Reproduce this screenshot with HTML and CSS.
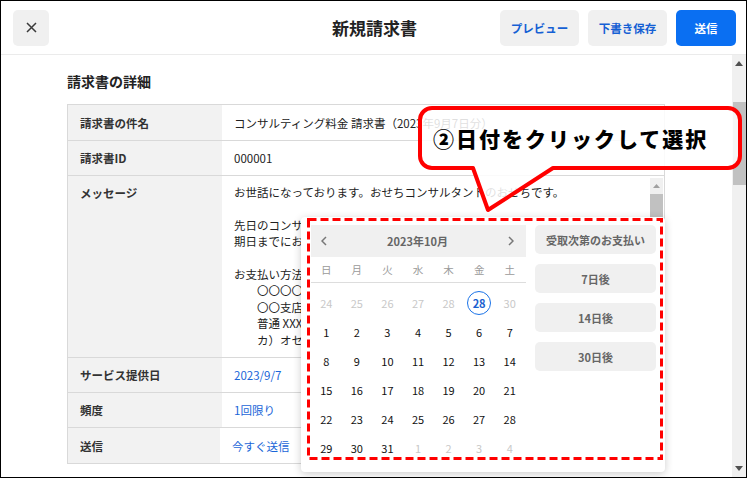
FILE: index.html
```html
<!DOCTYPE html>
<html lang="ja">
<head>
<meta charset="utf-8">
<title>新規請求書</title>
<link rel="stylesheet" href="styles.css">
</head>
<body>
<div class="frame">
  <header class="topbar">
    <div class="tb-left">
      <button class="btn-close" aria-label="閉じる">
        <svg width="11" height="11" viewBox="0 0 11 11"><path d="M1 1 L10 10 M10 1 L1 10" stroke="#3a3a3a" stroke-width="1.5" fill="none"/></svg>
      </button>
    </div>
    <h1 class="title">新規請求書</h1>
    <div class="tb-right">
      <button class="btn btn-gray">プレビュー</button>
      <button class="btn btn-gray">下書き保存</button>
      <button class="btn btn-blue">送信</button>
    </div>
  </header>

  <div class="page">
    <main class="content">
      <h2 class="section-title">請求書の詳細</h2>
      <div class="table">
        <div class="row h36">
          <div class="lbl">請求書の件名</div>
          <div class="val">コンサルティング料金 請求書（2023年9月7日分）</div>
        </div>
        <div class="row h35">
          <div class="lbl">請求書ID</div>
          <div class="val">000001</div>
        </div>
        <div class="row h182 top">
          <div class="lbl">メッセージ</div>
          <div class="val msg">
            <div class="msg-text">お世話になっております。おせちコンサルタントのおせちです。

先日のコンサルティングの請求書をお送りいたします。
期日までにお支払いいただきますようお願いいたします。

お支払い方法：
　　〇〇〇〇銀行
　　〇〇支店
　　普通 XXXXXXX
　　カ）オセチコンサルタント</div>
            <div class="ta-scroll">
              <div class="ta-up"><svg width="7" height="4" viewBox="0 0 7 4"><path d="M0 4 L3.5 0 L7 4 Z" fill="#a0a0a0"/></svg></div>
              <div class="ta-thumb"></div>
            </div>
          </div>
        </div>
        <div class="row h35">
          <div class="lbl">サービス提供日</div>
          <div class="val link">2023/9/7</div>
        </div>
        <div class="row h35">
          <div class="lbl">頻度</div>
          <div class="val link">1回限り</div>
        </div>
        <div class="row h36 last">
          <div class="lbl">送信</div>
          <div class="val link">今すぐ送信</div>
        </div>
      </div>
    </main>
    <div class="vscroll">
      <div class="vs-btn"><svg width="8" height="5" viewBox="0 0 8 5"><path d="M0 5 L4 0 L8 5 Z" fill="#505050"/></svg></div>
      <div class="vs-track"><div class="vs-thumb"></div></div>
      <div class="vs-btn"><svg width="8" height="5" viewBox="0 0 8 5"><path d="M0 0 L4 5 L8 0 Z" fill="#505050"/></svg></div>
    </div>
  </div>

  <div class="popup">
    <div class="cal">
      <div class="cal-head">
        <svg class="chev" width="6" height="10" viewBox="0 0 6 10"><path d="M5 1 L1 5 L5 9" stroke="#777" stroke-width="1.5" fill="none"/></svg>
        <span class="cal-month">2023年10月</span>
        <svg class="chev" width="6" height="10" viewBox="0 0 6 10"><path d="M1 1 L5 5 L1 9" stroke="#777" stroke-width="1.5" fill="none"/></svg>
      </div>
      <div class="cal-week">
        <span>日</span><span>月</span><span>火</span><span>水</span><span>木</span><span>金</span><span>土</span>
      </div>
      <div class="cal-days">
        <span class="mute">24</span><span class="mute">25</span><span class="mute">26</span><span class="mute">27</span><span class="mute">28</span><span><b class="sel">28</b></span><span class="mute">30</span>
        <span>1</span><span>2</span><span>3</span><span>4</span><span>5</span><span>6</span><span>7</span>
        <span>8</span><span>9</span><span>10</span><span>11</span><span>12</span><span>13</span><span>14</span>
        <span>15</span><span>16</span><span>17</span><span>18</span><span>19</span><span>20</span><span>21</span>
        <span>22</span><span>23</span><span>24</span><span>25</span><span>26</span><span>27</span><span>28</span>
        <span>29</span><span>30</span><span>31</span><span class="mute">1</span><span class="mute">2</span><span class="mute">3</span><span class="mute">4</span>
      </div>
    </div>
    <div class="quick">
      <button class="qbtn">受取次第のお支払い</button>
      <button class="qbtn">7日後</button>
      <button class="qbtn">14日後</button>
      <button class="qbtn">30日後</button>
    </div>
  </div>

  <svg class="dash" width="356" height="242" viewBox="0 0 356 242">
    <rect x="1.5" y="1.5" width="353" height="239" fill="none" stroke="#ffffff" stroke-width="3"/>
    <rect x="1.5" y="1.5" width="353" height="239" fill="none" stroke="#ff0000" stroke-width="3" stroke-dasharray="8 4"/>
  </svg>

  <div class="callout">
    <svg class="callout-bg" width="326" height="108" viewBox="0 0 326 108">
      <path d="M14 2 H310 A12 12 0 0 1 322 14 V50 A12 12 0 0 1 310 62 H135 L70 104 L55 62 H14 A12 12 0 0 1 2 50 V14 A12 12 0 0 1 14 2 Z" fill="rgba(255,255,255,0.86)" stroke="#ff0000" stroke-width="4" stroke-linejoin="round"/>
    </svg>
    <div class="callout-text">②日付をクリックして選択</div>
  </div>
</div>
</body>
</html>
```

FILE: styles.css
```css
* { box-sizing: border-box; }

html, body {
  margin: 0;
  padding: 0;
  background: #fff;
}

body {
  font-family: "Noto Sans CJK JP", "Noto Sans", sans-serif;
  color: #222;
}

button {
  font-family: inherit;
  border: none;
  cursor: pointer;
}

.frame {
  position: relative;
  width: 747px;
  height: 478px;
  border: 1px solid #000;
  overflow: hidden;
  background: #fff;
}

/* header */
.topbar {
  display: grid;
  grid-template-columns: 1fr auto 1fr;
  align-items: center;
  height: 54px;
  padding: 0 10px 0 12px;
  border-bottom: 1px solid #ebebeb;
}

.tb-left { display: flex; }

.btn-close {
  width: 36px;
  height: 36px;
  border-radius: 5px;
  background: #f0f0f0;
  display: flex;
  align-items: center;
  justify-content: center;
  padding: 0;
}

.title {
  margin: 0;
  font-size: 17px;
  font-weight: 700;
  color: #222;
  line-height: 24px;
}

.tb-right {
  display: flex;
  justify-content: flex-end;
  gap: 9px;
}

.btn {
  height: 36px;
  border-radius: 5px;
  font-size: 11.5px;
  font-weight: 700;
  padding: 0;
}

.btn-gray {
  width: 79px;
  background: #f0f0f0;
  color: #1560d4;
}

.btn-blue {
  width: 60px;
  background: #0a6ff2;
  color: #fff;
}

/* page */
.page {
  display: flex;
  height: 422px;
}

.content {
  flex: 1;
  padding: 16px 0 0 66px;
  overflow: hidden;
}

.section-title {
  margin: 0 0 13px;
  font-size: 14px;
  line-height: 20px;
  font-weight: 700;
  color: #222;
}

.table {
  width: 598px;
  border: 1px solid #d9d9d9;
  border-bottom: none;
}

.row {
  display: flex;
  border-bottom: 1px solid #d9d9d9;
}

.h36 { height: 36px; }
.h35 { height: 35px; }
.h182 { height: 182px; }

.lbl {
  width: 154px;
  flex: none;
  background: #f2f2f2;
  padding-left: 12px;
  display: flex;
  align-items: center;
  font-size: 11.5px;
  font-weight: 700;
  color: #333;
}

.val {
  flex: 1;
  padding-left: 12px;
  display: flex;
  align-items: center;
  font-size: 11.5px;
  color: #222;
  white-space: nowrap;
  overflow: hidden;
}

.row.top .lbl {
  align-items: flex-start;
  padding-top: 9px;
}

.last .lbl { width: 152px; }
.last .val { padding-left: 12px; }

.link { color: #1a66d8; }

.val.msg {
  align-items: stretch;
  padding: 0 1px 0 12px;
}

.msg-text {
  flex: 1;
  padding-top: 8px;
  white-space: pre;
  line-height: 16.4px;
  overflow: hidden;
}

.ta-scroll {
  width: 13px;
  flex: none;
  margin-top: 2px;
  background: #f0f0f0;
  display: flex;
  flex-direction: column;
}

.ta-up {
  height: 15px;
  display: flex;
  align-items: center;
  justify-content: center;
}

.ta-thumb {
  height: 70px;
  margin: 1px 0 0;
  background: #c1c1c1;
}

/* page scrollbar */
.vscroll {
  width: 14px;
  flex: none;
  background: #f0f0f0;
  display: flex;
  flex-direction: column;
}

.vs-btn {
  height: 17px;
  display: flex;
  align-items: center;
  justify-content: center;
}

.vs-track {
  flex: 1;
  padding-top: 30px;
}

.vs-thumb {
  height: 83px;
  margin-left: 1px;
  background: #c1c1c1;
}

/* date popup */
.popup {
  position: absolute;
  left: 300px;
  top: 216px;
  width: 364px;
  height: 255px;
  background: #fff;
  border-radius: 4px;
  box-shadow: 0 2px 9px rgba(0, 0, 0, 0.2);
  display: flex;
  gap: 9px;
  padding: 8px 9px 0 10px;
}

.cal {
  width: 215px;
  flex: none;
}

.cal-head {
  height: 32px;
  background: #f0f0f0;
  display: flex;
  align-items: center;
  justify-content: space-between;
  padding: 0 12px 0 10px;
}

.cal-month {
  font-size: 11px;
  font-weight: 700;
  color: #666;
}

.cal-week {
  height: 26px;
  display: grid;
  grid-template-columns: repeat(7, 1fr);
  align-items: center;
  border-bottom: 1px solid #dddddd;
  font-size: 10.5px;
  color: #9a9a9a;
  text-align: center;
  padding-right: 1px;
}

.cal-days {
  display: grid;
  grid-template-columns: repeat(7, 1fr);
  grid-auto-rows: 29px;
  padding-top: 5px;
  padding-right: 1px;
  font-size: 11px;
  color: #111;
  text-align: center;
}

.cal-days span {
  display: flex;
  align-items: center;
  justify-content: center;
}

.cal-days .mute { color: #c8c8c8; }

.sel {
  width: 24px;
  height: 24px;
  border: 1.5px solid #1a73e8;
  border-radius: 50%;
  color: #1a5fd0;
  font-weight: 700;
  display: flex;
  align-items: center;
  justify-content: center;
}

.quick {
  width: 121px;
  display: flex;
  flex-direction: column;
  gap: 10px;
}

.qbtn {
  height: 29px;
  border-radius: 5px;
  background: #f0f0f0;
  color: #666;
  font-size: 11px;
  font-weight: 700;
  padding: 0;
}

/* annotations */
.dash {
  position: absolute;
  left: 306px;
  top: 217px;
}

.callout {
  position: absolute;
  left: 417px;
  top: 105px;
  width: 326px;
  height: 108px;
}

.callout-bg {
  position: absolute;
  left: 0;
  top: 0;
}

.callout-text {
  position: absolute;
  left: 15px;
  top: 2px;
  height: 60px;
  display: flex;
  align-items: center;
  font-size: 21px;
  font-weight: 900;
  letter-spacing: 2px;
  color: #000;
  white-space: nowrap;
}
```
